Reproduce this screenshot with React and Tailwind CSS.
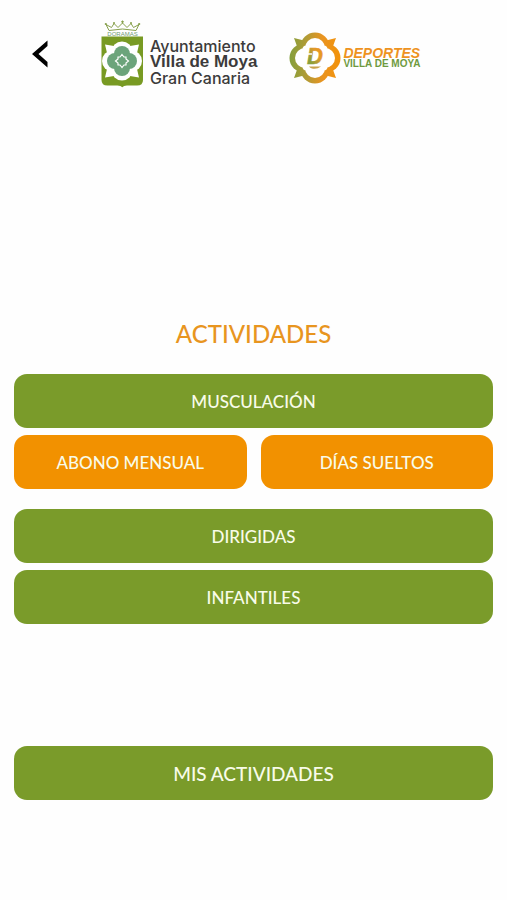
function TownCrest() {
  return (
    <svg viewBox="-1 0 44 68" className="w-11 shrink-0" aria-hidden="true">
      <g fill="none" stroke="#87a04c" strokeWidth="1" strokeLinejoin="round">
        <path d="M8 10.500 L5 4.500 L10.500 7.500 L13 3.500 L17 7.500 L21.500 3 L26 7.500 L30 3.500 L32.500 7.500 L38 4.500 L35 10.500" />
        <path d="M8 10.500 Q21.500 7.500 35 10.500" />
        <path d="M21.500 0.500 V3.500 M20 1.800 H23" />
      </g>
      <g fill="#87a04c">
        <circle cx="4.800" cy="4" r="1.100" />
        <circle cx="13" cy="3" r="1" />
        <circle cx="30" cy="3" r="1" />
        <circle cx="38.200" cy="4" r="1.100" />
      </g>
      <text x="21.500" y="15.500" textAnchor="middle" fontSize="6" fill="#6f9a72" fontFamily="Liberation Sans, sans-serif">DORAMAS</text>
      <path d="M0.500 16.500 H42 V60 Q42 65.500 36 65.500 H26 Q22.500 65.500 21.300 67.300 Q20 65.500 16.500 65.500 H6.500 Q0.500 65.500 0.500 60 Z" fill="#789a23" />
      <g fill="#fff">
        <path d="M4 24.500 L13 26 L21 24 L29 26 L38 24.500 L36 33 L38 41 L36 49 L38 57.500 L29 56 L21 58 L13 56 L4 57.500 L6 49 L4 41 L6 33 Z" />
        <circle cx="21" cy="32" r="10.500" />
        <circle cx="21" cy="50" r="10.500" />
        <circle cx="11.500" cy="41" r="10.500" />
        <circle cx="30.500" cy="41" r="10.500" />
      </g>
      <g fill="#6ca47b">
        <circle cx="21" cy="34" r="8" />
        <circle cx="21" cy="48" r="8" />
        <circle cx="14" cy="41" r="8" />
        <circle cx="28" cy="41" r="8" />
      </g>
      <path d="M21 34.500 L23 37 H25 V39 L27.500 41 L25 43 V45 H23 L21 47.500 L19 45 H17 V43 L14.500 41 L17 39 V37 H19 Z" fill="#6ca47b" stroke="#fff" strokeWidth="1.200" />
    </svg>
  )
}

function SportsBadge() {
  return (
    <svg viewBox="0 0 52 52" className="w-13 shrink-0" aria-hidden="true">
      <defs>
        <linearGradient id="ring" gradientUnits="userSpaceOnUse" x1="0" y1="0" x2="52" y2="0">
          <stop offset="0" stopColor="#829f3c" />
          <stop offset="0.350" stopColor="#b39b35" />
          <stop offset="0.650" stopColor="#ea9420" />
          <stop offset="1" stopColor="#f39208" />
        </linearGradient>
        <linearGradient id="letter" x1="0" y1="1" x2="1" y2="0">
          <stop offset="0.250" stopColor="#8a9f3c" />
          <stop offset="0.600" stopColor="#e39a2b" />
          <stop offset="1" stopColor="#f39208" />
        </linearGradient>
      </defs>
      <g fill="url(#ring)">
        <path d="M5 6 L17 9 H35 L47 6 L43 17 V35 L47 46 L35 43 H17 L5 46 L9 35 V17 Z" />
        <circle cx="26" cy="15" r="14.500" />
        <circle cx="26" cy="37" r="14.500" />
        <circle cx="15" cy="26" r="14.500" />
        <circle cx="37" cy="26" r="14.500" />
      </g>
      <g fill="#fff">
        <rect x="13.500" y="13.500" width="25" height="25" rx="4" />
        <circle cx="26" cy="16" r="10" />
        <circle cx="26" cy="36" r="10" />
        <circle cx="16" cy="26" r="10" />
        <circle cx="36" cy="26" r="10" />
      </g>
      <text x="26" y="32" textAnchor="middle" fontSize="22" fontWeight="700" fontStyle="italic" fill="url(#letter)" stroke="url(#letter)" strokeWidth="0.500" fontFamily="Inter, Liberation Sans, sans-serif">D</text>
      <path d="M16 22 H23" stroke="#fff" strokeWidth="1.500" />
      <path d="M20 34.500 H32 Q28 37.500 23 36.500 Q21 36 20 34.500 Z" fill="#c9a24c" />
    </svg>
  )
}

function ActivityButton({ label, color = 'green', large = false }) {
  const bg = color === 'orange' ? 'bg-[#f29100]' : 'bg-[#7a9b2a]'
  return (
    <button type="button" className={`${bg} ${large ? 'text-[19px]' : 'text-[17px]'} w-full h-[54px] pt-0.5 rounded-[13px] font-medium text-[#f8fbe9]`}>
      {label}
    </button>
  )
}

export default function App() {
  return (
    <div className="min-h-screen bg-[#fefefe] font-['Lato',sans-serif]">
      <header className="flex items-center pt-5 pl-8">
        <button type="button" aria-label="Volver" className="w-4 shrink-0">
          <svg viewBox="0 0 16 28" className="w-4">
            <path d="M15.500 0.500 V6 L6.500 14 L15.500 22 V27.500 L0 14 Z" fill="#000" />
          </svg>
        </button>
        <div className="ml-13 flex items-center gap-1.5">
          <TownCrest />
          <div className="pt-4 font-['Inter',sans-serif] text-base leading-4 font-medium whitespace-nowrap text-[#3c3b3b]">
            <div>Ayuntamiento</div>
            <div className="font-['Liberation_Sans',sans-serif] text-[17px] leading-4 font-bold">Villa de Moya</div>
            <div>Gran Canaria</div>
          </div>
        </div>
        <div className="ml-8 flex items-center gap-0.5 pt-2">
          <SportsBadge />
          <div className="font-['Liberation_Sans',sans-serif] font-bold leading-[10px] whitespace-nowrap">
            <div className="text-sm leading-3 font-bold italic text-[#ee931f]">DEPORTES</div>
            <div className="text-[10px] text-[#6f9a3e]">VILLA DE MOYA</div>
          </div>
        </div>
      </header>

      <main className="px-3.5 pb-25">
        <h1 className="mt-[226px] text-center text-2xl leading-10 font-medium text-[#e8951f]">ACTIVIDADES</h1>
        <div className="mt-5 flex flex-col gap-[7px]">
          <ActivityButton label="MUSCULACIÓN" />
          <div className="grid grid-cols-2 gap-3.5">
            <ActivityButton label="ABONO MENSUAL" color="orange" />
            <ActivityButton label="DÍAS SUELTOS" color="orange" />
          </div>
        </div>
        <div className="mt-5 flex flex-col gap-[7px]">
          <ActivityButton label="DIRIGIDAS" />
          <ActivityButton label="INFANTILES" />
        </div>
        <div className="mt-[122px]">
          <ActivityButton label="MIS ACTIVIDADES" large />
        </div>
      </main>
    </div>
  )
}
